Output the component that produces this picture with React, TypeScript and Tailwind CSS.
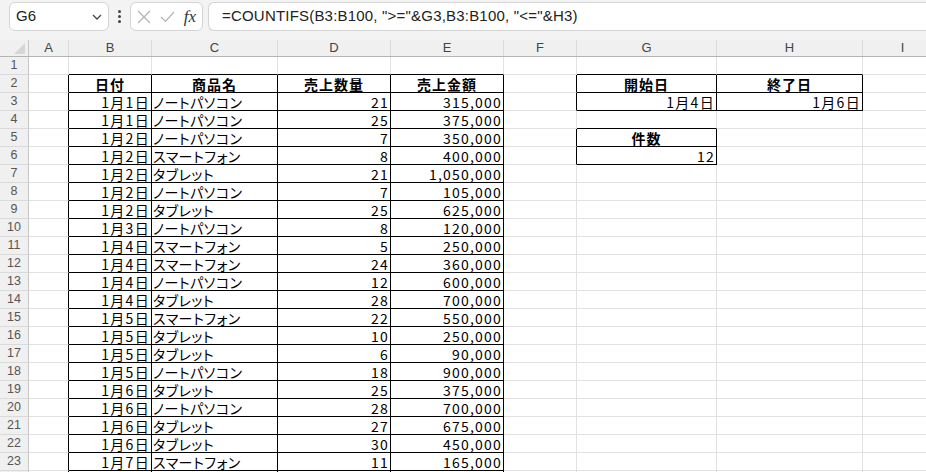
import React from "react";

const COLS = ["A", "B", "C", "D", "E", "F", "G", "H", "I"];
const WIDTHS = [40, 83, 126, 113, 113, 73, 140, 146, 80];

type Row = [string, string, string, string];
const DATA: Row[] = [
  ["1月1日", "ノートパソコン", "21", "315,000"],
  ["1月1日", "ノートパソコン", "25", "375,000"],
  ["1月2日", "ノートパソコン", "7", "350,000"],
  ["1月2日", "スマートフォン", "8", "400,000"],
  ["1月2日", "タブレット", "21", "1,050,000"],
  ["1月2日", "ノートパソコン", "7", "105,000"],
  ["1月2日", "タブレット", "25", "625,000"],
  ["1月3日", "ノートパソコン", "8", "120,000"],
  ["1月4日", "スマートフォン", "5", "250,000"],
  ["1月4日", "スマートフォン", "24", "360,000"],
  ["1月4日", "ノートパソコン", "12", "600,000"],
  ["1月4日", "タブレット", "28", "700,000"],
  ["1月5日", "スマートフォン", "22", "550,000"],
  ["1月5日", "タブレット", "10", "250,000"],
  ["1月5日", "タブレット", "6", "90,000"],
  ["1月5日", "ノートパソコン", "18", "900,000"],
  ["1月6日", "タブレット", "25", "375,000"],
  ["1月6日", "ノートパソコン", "28", "700,000"],
  ["1月6日", "タブレット", "27", "675,000"],
  ["1月6日", "タブレット", "30", "450,000"],
  ["1月7日", "スマートフォン", "11", "165,000"],
];

function bordered(r: number, c: number): boolean {
  if (r >= 2 && r <= 24 && c >= 1 && c <= 4) return true;
  if ((r === 2 || r === 3) && (c === 6 || c === 7)) return true;
  if ((r === 5 || r === 6) && c === 6) return true;
  return false;
}

type Kind = "head" | "date" | "num" | "text";
type Cell = { text: string; kind: Kind };

function cellAt(r: number, c: number): Cell | null {
  if (r === 2) {
    if (c === 1) return { text: "日付", kind: "head" };
    if (c === 2) return { text: "商品名", kind: "head" };
    if (c === 3) return { text: "売上数量", kind: "head" };
    if (c === 4) return { text: "売上金額", kind: "head" };
    if (c === 6) return { text: "開始日", kind: "head" };
    if (c === 7) return { text: "終了日", kind: "head" };
  }
  if (r === 3 && c === 6) return { text: "1月4日", kind: "date" };
  if (r === 3 && c === 7) return { text: "1月6日", kind: "date" };
  if (r === 5 && c === 6) return { text: "件数", kind: "head" };
  if (r === 6 && c === 6) return { text: "12", kind: "num" };
  if (r >= 3 && r <= 23 && c >= 1 && c <= 4) {
    const d = DATA[r - 3];
    const kind: Kind = c === 1 ? "date" : c === 2 ? "text" : "num";
    return { text: d[c - 1], kind };
  }
  return null;
}

function cellClass(kind: Kind | undefined): string {
  switch (kind) {
    case "head":
      return "justify-center font-bold tracking-[1px] ";
    case "date":
      return "justify-end pr-[1px] ";
    case "num":
      return "justify-end pr-[1px] ";
    case "text":
      return "justify-start pl-[1px] ";
    default:
      return "";
  }
}

function spanClass(kind: Kind): string {
  switch (kind) {
    case "date":
      return "tracking-[1.3px]";
    case "num":
      return "tracking-[1.2px]";
    case "text":
      return "[font-feature-settings:'palt'] tracking-[0.5px]";
    default:
      return "";
  }
}

function SheetRow({ r }: { r: number }) {
  return (
    <div className="flex h-[18px]">
      <div className="w-[29px] shrink-0 h-[18px] bg-[#f0f0f0] border-r border-r-[#c6c6c6] border-b border-b-[#dadada] flex items-center justify-center text-[12.5px] text-[#555] font-['Liberation_Sans',sans-serif]">
        {r <= 23 ? r : ""}
      </div>
      {COLS.map((_, c) => {
        const rightBlack = bordered(r, c) || bordered(r, c + 1);
        const bottomBlack = bordered(r, c) || bordered(r + 1, c);
        const cell = cellAt(r, c);
        return (
          <div
            key={c}
            style={{ width: WIDTHS[c] }}
            className={
              "shrink-0 h-[18px] border-r border-b flex items-end whitespace-nowrap text-[14px] leading-[16px] text-black font-['Noto_Sans_CJK_JP',sans-serif] " +
              (rightBlack ? "border-r-black " : "border-r-[#e1e1e1] ") +
              (bottomBlack ? "border-b-black " : "border-b-[#e1e1e1] ") +
              cellClass(cell?.kind)
            }
          >
            {cell ? <span className={spanClass(cell.kind)}>{cell.text}</span> : null}
          </div>
        );
      })}
    </div>
  );
}

export default function App() {
  const rows = Array.from({ length: 24 }, (_, i) => i + 1);
  return (
    <div className="w-[926px] h-[472px] overflow-hidden bg-white">
      {/* Formula bar */}
      <div className="h-[40px] bg-[#f3f3f3] flex items-start pt-[2px]">
        <div className="ml-[9px] w-[100px] h-[29px] bg-white border border-[#d4d4d4] rounded-[6px] flex items-center pl-[6px] pr-[6px]">
          <span className="text-[15px] text-[#222] font-['Liberation_Sans',sans-serif]">G6</span>
          <svg className="ml-auto" width="10" height="6" viewBox="0 0 10 6">
            <path d="M1 1 L5 5 L9 1" fill="none" stroke="#444" strokeWidth="1.3" />
          </svg>
        </div>
        <div className="w-[21px] h-[29px] flex flex-col items-center justify-center gap-[2px]">
          <div className="w-[3px] h-[3px] rounded-full bg-[#444]" />
          <div className="w-[3px] h-[3px] rounded-full bg-[#444]" />
          <div className="w-[3px] h-[3px] rounded-full bg-[#444]" />
        </div>
        <div className="w-[73px] h-[29px] bg-white border border-[#d4d4d4] rounded-[6px] flex items-center pl-[6px] pr-[4px]">
          <svg width="14" height="14" viewBox="0 0 14 14">
            <path d="M1 1 L13 13 M13 1 L1 13" stroke="#b3b3b3" strokeWidth="1.2" />
          </svg>
          <svg className="ml-[9px]" width="15" height="12" viewBox="0 0 15 12">
            <path d="M1 6 L5.5 10.5 L14 1" fill="none" stroke="#b3b3b3" strokeWidth="1.2" />
          </svg>
          <span className="ml-auto mr-[2px] text-[17px] italic text-[#333] font-['Liberation_Serif',serif] leading-none">
            fx
          </span>
        </div>
        <div className="ml-[5px] flex-1 h-[29px] bg-white border border-r-0 border-[#d4d4d4] rounded-l-[6px] flex items-center pl-[13px]">
          <span className="text-[15px] tracking-[0.2px] text-[#222] font-['Liberation_Sans',sans-serif]">
            =COUNTIFS(B3:B100, "&gt;="&amp;G3,B3:B100, "&lt;="&amp;H3)
          </span>
        </div>
      </div>
      {/* Column headers */}
      <div className="flex h-[17px] bg-[#f0f0f0] border-b border-b-[#b4b4b4]">
        <div className="w-[29px] shrink-0 h-[16px] border-r border-r-[#c6c6c6] relative">
          <svg className="absolute right-[3px] bottom-[2px]" width="11" height="11" viewBox="0 0 11 11">
            <path d="M11 0 L11 11 L0 11 Z" fill="#d6d6d6" />
          </svg>
        </div>
        {COLS.map((l, c) => (
          <div
            key={l}
            style={{ width: WIDTHS[c] }}
            className="shrink-0 h-[16px] border-r border-r-[#dadada] flex items-center justify-center text-[13px] text-[#444] font-['Liberation_Sans',sans-serif]"
          >
            {l}
          </div>
        ))}
      </div>
      {rows.map((r) => (
        <SheetRow key={r} r={r} />
      ))}
    </div>
  );
}
